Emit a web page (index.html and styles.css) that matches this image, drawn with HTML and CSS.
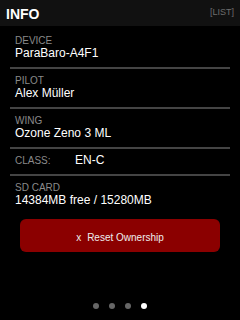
FILE: index.html
```html
<!DOCTYPE html>
<html lang="en">
<head>
  <meta charset="UTF-8" />
  <title>Info</title>
  <link rel="stylesheet" href="styles.css">
</head>
<body>

  <div class="screen">
    <!-- Header -->
    <div class="header">
      <h1>INFO</h1>
      <span class="mode">[LIST]</span>
    </div>

    <!-- Info rows -->
    <div class="info-list">
      <div class="row">
        <div class="label">DEVICE</div>
        <div class="value">ParaBaro-A4F1</div>
      </div>
      <div class="row">
        <div class="label">PILOT</div>
        <div class="value">Alex Müller</div>
      </div>
      <div class="row">
        <div class="label">WING</div>
        <div class="value">Ozone Zeno 3 ML</div>
      </div>
      <div class="row row-inline">
        <div class="label">CLASS:</div>
        <div class="value">EN-C</div>
      </div>
      <div class="row last">
        <div class="label">SD CARD</div>
        <div class="value">14384MB free / 15280MB</div>
      </div>
    </div>

    <button class="reset-btn"><span class="x">x</span>Reset Ownership</button>

    <!-- Page dots -->
    <div class="dots">
      <span class="dot"></span>
      <span class="dot"></span>
      <span class="dot"></span>
      <span class="dot active"></span>
    </div>
  </div>

</body>
</html>
```

FILE: styles.css
```css
body {
  margin: 0;
  background: #000;
  font-family: 'Liberation Sans', Arial, sans-serif;
  color: #fff;
}

.screen {
  width: 240px;
  height: 320px;
  display: flex;
  flex-direction: column;
  overflow: hidden;
}

.header {
  height: 26px;
  box-sizing: border-box;
  padding: 6px 6px 0 6px;
  background: #111;
  display: flex;
  justify-content: space-between;
  align-items: flex-start;
}

.header h1 {
  margin: 0;
  font-size: 14px;
  line-height: 16px;
  font-weight: bold;
}

.mode {
  margin-top: 1px;
  font-size: 9px;
  line-height: 10px;
  color: #6e6e6e;
}

.info-list {
  padding-top: 3px;
}

.row {
  margin: 0 10px;
  padding: 6px 5px 7px;
  border-bottom: 2px solid #444;
}

.row.last {
  border-bottom: none;
}

.label {
  font-size: 10px;
  line-height: 11px;
  color: #8a8a8a;
}

.value {
  font-size: 12px;
  line-height: 14px;
  color: #fff;
}

.row-inline {
  display: flex;
  align-items: baseline;
  padding-top: 4px;
}

.row-inline .label {
  width: 60px;
}

.reset-btn {
  margin: 5px 20px 0;
  height: 33px;
  padding: 4px 0 0;
  background: #8b0000;
  color: #eee;
  border: none;
  border-radius: 6px;
  font-family: 'Liberation Sans', Arial, sans-serif;
  font-size: 10px;
}

.reset-btn .x {
  margin-right: 6px;
}

.dots {
  margin-top: auto;
  margin-bottom: 11px;
  display: flex;
  justify-content: center;
  gap: 10px;
}

.dot {
  width: 6px;
  height: 6px;
  border-radius: 50%;
  background: #666;
}

.dot.active {
  background: #fff;
}
```
